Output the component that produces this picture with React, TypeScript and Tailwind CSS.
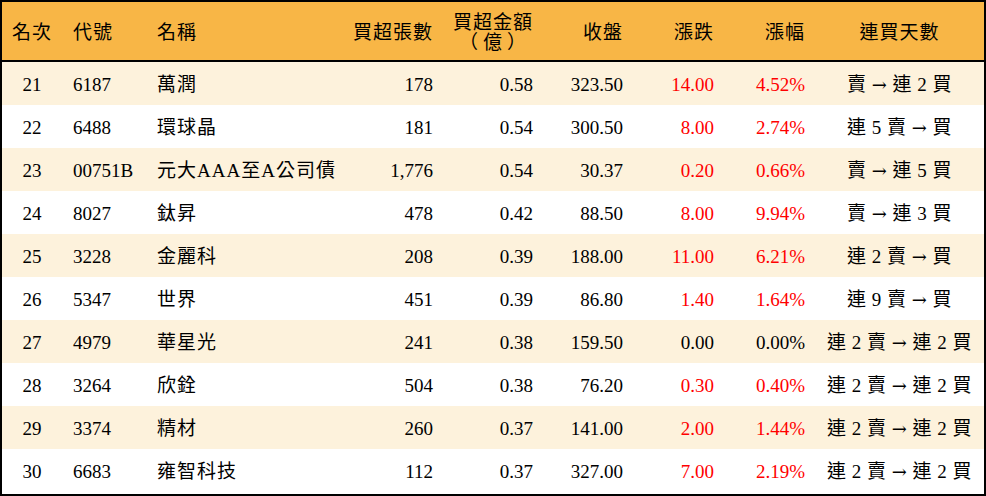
import React from "react";

type Row = {
  rank: string;
  code: string;
  name: string;
  vol: string;
  amt: string;
  close: string;
  chg: string;
  pct: string;
  days: [string, string];
  red: boolean;
};

const rows: Row[] = [
  { rank: "21", code: "6187", name: "萬潤", vol: "178", amt: "0.58", close: "323.50", chg: "14.00", pct: "4.52%", days: ["賣", "連 2 買"], red: true },
  { rank: "22", code: "6488", name: "環球晶", vol: "181", amt: "0.54", close: "300.50", chg: "8.00", pct: "2.74%", days: ["連 5 賣", "買"], red: true },
  { rank: "23", code: "00751B", name: "元大AAA至A公司債", vol: "1,776", amt: "0.54", close: "30.37", chg: "0.20", pct: "0.66%", days: ["賣", "連 5 買"], red: true },
  { rank: "24", code: "8027", name: "鈦昇", vol: "478", amt: "0.42", close: "88.50", chg: "8.00", pct: "9.94%", days: ["賣", "連 3 買"], red: true },
  { rank: "25", code: "3228", name: "金麗科", vol: "208", amt: "0.39", close: "188.00", chg: "11.00", pct: "6.21%", days: ["連 2 賣", "買"], red: true },
  { rank: "26", code: "5347", name: "世界", vol: "451", amt: "0.39", close: "86.80", chg: "1.40", pct: "1.64%", days: ["連 9 賣", "買"], red: true },
  { rank: "27", code: "4979", name: "華星光", vol: "241", amt: "0.38", close: "159.50", chg: "0.00", pct: "0.00%", days: ["連 2 賣", "連 2 買"], red: false },
  { rank: "28", code: "3264", name: "欣銓", vol: "504", amt: "0.38", close: "76.20", chg: "0.30", pct: "0.40%", days: ["連 2 賣", "連 2 買"], red: true },
  { rank: "29", code: "3374", name: "精材", vol: "260", amt: "0.37", close: "141.00", chg: "2.00", pct: "1.44%", days: ["連 2 賣", "連 2 買"], red: true },
  { rank: "30", code: "6683", name: "雍智科技", vol: "112", amt: "0.37", close: "327.00", chg: "7.00", pct: "2.19%", days: ["連 2 賣", "連 2 買"], red: true },
];

const font = {
  fontFamily: '"Liberation Serif", "Noto Sans CJK TC", serif',
};

export default function App() {
  return (
    <div
      className="w-[986px] h-[496px] border-2 border-black bg-white text-black text-[19px] flex flex-col"
      style={font}
    >
      <div className="h-[60px] pt-[4px] bg-[#f8b646] border-b-2 border-black flex items-center shrink-0 font-normal">
        <div className="w-[60px] text-center tracking-[1px]">名次</div>
        <div className="w-[85px] pl-[11px] tracking-[1px]">代號</div>
        <div className="w-[196px] pl-[10px] tracking-[1px]">名稱</div>
        <div className="w-[100px] pr-[10px] text-right tracking-[1px]">買超張數</div>
        <div className="w-[100px] pr-[10px] text-right leading-[20px] tracking-[1px]">
          <div>買超金額</div>
          <div className="tracking-[5px] pr-[2px]">（億）</div>
        </div>
        <div className="w-[90px] pr-[10px] text-right tracking-[1px]">收盤</div>
        <div className="w-[91px] pr-[10px] text-right tracking-[1px]">漲跌</div>
        <div className="w-[91px] pr-[10px] text-right tracking-[1px]">漲幅</div>
        <div className="flex-1 text-center tracking-[1px]">連買天數</div>
      </div>
      {rows.map((r, i) => (
        <div
          key={r.rank}
          className={`h-[43px] pt-[4px] flex items-center shrink-0 ${i % 2 === 0 ? "bg-[#fdf2dc]" : "bg-white"}`}
        >
          <div className="w-[60px] text-center">{r.rank}</div>
          <div className="w-[85px] pl-[11px]">{r.code}</div>
          <div className="w-[196px] pl-[10px] tracking-[1px] whitespace-nowrap">{r.name}</div>
          <div className="w-[100px] pr-[10px] text-right">{r.vol}</div>
          <div className="w-[100px] pr-[10px] text-right">{r.amt}</div>
          <div className="w-[90px] pr-[10px] text-right">{r.close}</div>
          <div className={`w-[91px] pr-[10px] text-right ${r.red ? "text-[#ff0000]" : ""}`}>{r.chg}</div>
          <div className={`w-[91px] pr-[10px] text-right ${r.red ? "text-[#ff0000]" : ""}`}>{r.pct}</div>
          <div className="flex-1 text-center whitespace-nowrap tracking-[0.5px]">
            {r.days[0]}{" "}
            <span className="text-[18px]" style={{ fontFamily: '"DejaVu Serif", serif' }}>→</span>{" "}
            {r.days[1]}
          </div>
        </div>
      ))}
    </div>
  );
}
